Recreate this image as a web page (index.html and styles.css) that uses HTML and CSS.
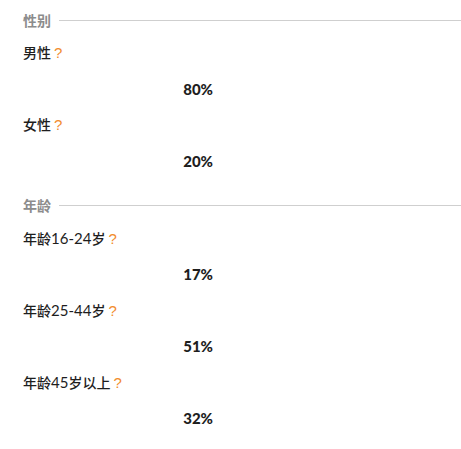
FILE: index.html
```html
<!DOCTYPE html>
<html lang="zh">
<head>
<meta charset="utf-8">
<link rel="stylesheet" href="styles.css">
</head>
<body>
<div class="wrap">
  <div class="section">
    <div class="title">性别</div>
    <div class="item">
      <div class="label">男性<span class="q">?</span></div>
      <div class="pct">80%</div>
    </div>
    <div class="item">
      <div class="label">女性<span class="q">?</span></div>
      <div class="pct">20%</div>
    </div>
  </div>
  <div class="section">
    <div class="title">年龄</div>
    <div class="item">
      <div class="label">年龄<span class="num">16-24</span>岁<span class="q">?</span></div>
      <div class="pct">17%</div>
    </div>
    <div class="item">
      <div class="label">年龄<span class="num">25-44</span>岁<span class="q">?</span></div>
      <div class="pct">51%</div>
    </div>
    <div class="item">
      <div class="label">年龄<span class="num">45</span>岁以上<span class="q">?</span></div>
      <div class="pct">32%</div>
    </div>
  </div>
</div>
</body>
</html>
```

FILE: styles.css
```css
html, body {
  margin: 0;
  padding: 0;
  background: #fff;
}
body {
  font-family: Lato, "Noto Sans CJK SC", sans-serif;
  color: #222;
}
.wrap {
  padding: 10px 0 0 23px;
}
.section {
  margin-bottom: 24px;
}
.title {
  display: flex;
  align-items: center;
  gap: 8px;
  height: 20px;
  font-size: 14px;
  font-weight: 700;
  color: #8c8c8c;
  margin-bottom: 13px;
}
.title::after {
  content: "";
  flex: 1;
  height: 1px;
  background: #cfcfcf;
}
.item {
  width: 190px;
}
.label {
  height: 20px;
  line-height: 20px;
  font-size: 14px;
  font-weight: 500;
  margin-bottom: 16px;
  white-space: nowrap;
  color: #1e1e1e;
}
.num {
  font-size: 15px;
  font-weight: 400;
}
.q {
  font-family: "Liberation Sans", "Noto Sans CJK SC", sans-serif;
  font-size: 15px;
  font-weight: 400;
  color: #f28c2e;
  margin-left: 3px;
}
.pct {
  height: 20px;
  line-height: 20px;
  font-size: 15px;
  font-weight: 900;
  text-align: right;
  margin-bottom: 16px;
  color: #1e1e1e;
}
.item:last-child .pct {
  margin-bottom: 0;
}
```
